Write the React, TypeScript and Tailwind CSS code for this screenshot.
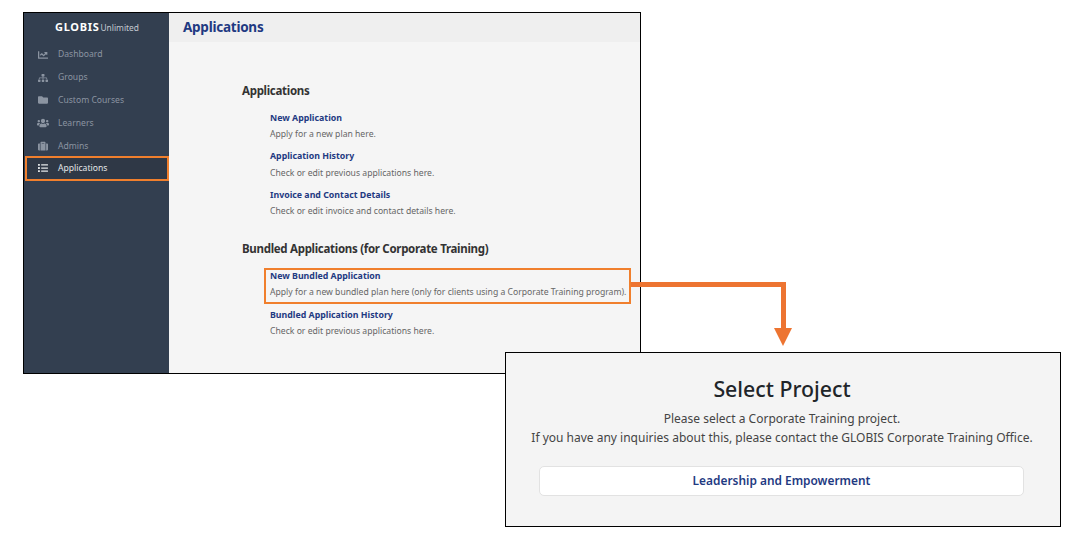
import React from 'react';
import { FaChartLine, FaSitemap, FaFolder, FaUsers, FaSuitcase, FaList } from 'react-icons/fa';

const navItems = [
  { label: 'Dashboard', icon: FaChartLine, iconSize: 'w-[10px] h-[10px]' },
  { label: 'Groups', icon: FaSitemap, iconSize: 'w-[10px] h-[10px]' },
  { label: 'Custom Courses', icon: FaFolder, iconSize: 'w-[10px] h-[10px]' },
  { label: 'Learners', icon: FaUsers, iconSize: 'w-[12px] h-[12px] -mx-[1px]' },
  { label: 'Admins', icon: FaSuitcase, iconSize: 'w-[10px] h-[10px]' },
];

const AppItem: React.FC<{ title: string; text: string; highlight?: boolean }> = ({ title, text, highlight }) => (
  <div
    className={`ml-[22px] w-[367px] pl-[4px] border-2 ${
      highlight ? 'h-[36.5px] mb-[2.3px] border-[#f07f2d]' : 'h-[38.8px] border-transparent'
    }`}
  >
    <div className="text-[8.8px] leading-[13px] font-bold text-[#1f3a82] whitespace-nowrap">{title}</div>
    <div className="mt-[1.4px] text-[8.63px] leading-[16px] text-[#666666] whitespace-nowrap">{text}</div>
  </div>
);

export default function App() {
  return (
    <div className="relative w-[1084px] h-[544px] bg-white overflow-hidden font-['Noto_Sans',sans-serif]">
      {/* main window */}
      <div className="absolute left-[23px] top-[12px] w-[618px] h-[362px] border border-black flex bg-[#f5f5f5]">
        <aside className="w-[145px] shrink-0 bg-[#333f50]">
          <div className="h-[29px] pt-[6px] pl-[31px] flex items-baseline text-white">
            <span className="text-[11px] font-bold tracking-[0.7px]">GLOBIS</span>
            <span className="ml-[1px] text-[8.4px] text-[#c4c9d0]">Unlimited</span>
          </div>
          <nav className="mt-[1.5px]">
            {navItems.map((item) => (
              <div key={item.label} className="h-[22.8px] flex items-center pl-[14px] text-[#8b94a1]">
                <item.icon className={`${item.iconSize} shrink-0`} />
                <span className="ml-[10px] text-[8.6px]">{item.label}</span>
              </div>
            ))}
            <div className="-mt-[1.5px] ml-[1px] h-[25px] flex items-center pl-[11px] bg-[#2f3846] border-2 border-[#f07f2d]">
              <FaList className="w-[10px] h-[10px] shrink-0 text-[#e4e6e9]" />
              <span className="ml-[10px] text-[8.6px] text-[#e4e6e9]">Applications</span>
            </div>
          </nav>
        </aside>
        <main className="flex-1 min-w-0">
          <header className="h-[29px] bg-[#efefef] pl-[14px] flex items-center">
            <h1 className="text-[13.5px] font-bold tracking-[-0.25px] text-[#1f3a82]">Applications</h1>
          </header>
          <div className="pl-[73px] pt-[40px]">
            <h2 className="text-[11.5px] leading-[18px] font-bold tracking-[-0.3px] text-[#333333]">Applications</h2>
            <div className="mt-[9.5px]">
              <AppItem title="New Application" text="Apply for a new plan here." />
              <AppItem title="Application History" text="Check or edit previous applications here." />
              <AppItem title="Invoice and Contact Details" text="Check or edit invoice and contact details here." />
            </div>
            <h2 className="mt-[14px] text-[11.5px] leading-[18px] font-bold tracking-[-0.3px] text-[#333333] whitespace-nowrap">
              Bundled Applications (for Corporate Training)
            </h2>
            <div className="mt-[10px]">
              <AppItem highlight title="New Bundled Application" text="Apply for a new bundled plan here (only for clients using a Corporate Training program)." />
              <AppItem title="Bundled Application History" text="Check or edit previous applications here." />
            </div>
          </div>
        </main>
      </div>

      {/* connector */}
      <div className="absolute left-[631px] top-[282px] w-[155px] h-[48px] border-t-[5px] border-r-[5px] border-[#ed7431]" />
      <svg className="absolute left-[774px] top-[328px]" width="18" height="18" viewBox="0 0 18 18">
        <path d="M0 0H18L9 18Z" fill="#ed7431" />
      </svg>

      {/* select project window */}
      <div className="absolute left-[505px] top-[352px] w-[556px] h-[175px] border border-black bg-[#f4f4f4] flex flex-col items-center">
        <h2 className="mt-[20px] pr-[2px] text-[21.3px] leading-[32px] font-medium text-[#212529]">Select Project</h2>
        <p className="mt-[4px] pr-[2px] text-[12px] leading-[19px] text-[#444444] text-center whitespace-nowrap">
          Please select a Corporate Training project.
          <br />
          If you have any inquiries about this, please contact the GLOBIS Corporate Training Office.
        </p>
        <button className="mt-[19px] self-start ml-[33px] w-[485px] h-[30px] bg-white border border-[#e2e2e2] rounded-[5px] text-[11.9px] font-semibold text-[#1f3a82]">
          Leadership and Empowerment
        </button>
      </div>
    </div>
  );
}
